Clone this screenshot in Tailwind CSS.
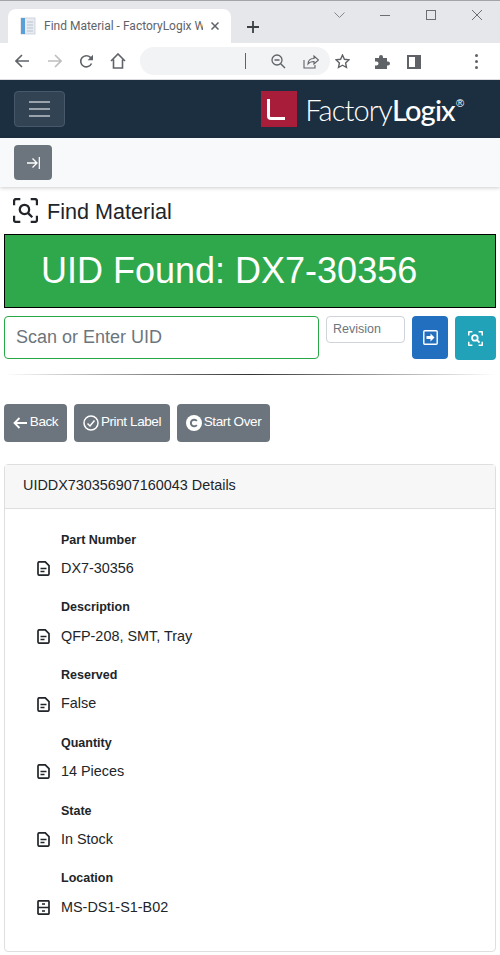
<!DOCTYPE html>
<html lang="en">

<head>
  <meta charset="UTF-8">
  <meta name="viewport" content="width=device-width, initial-scale=1.0">
  <script src="https://cdn.jsdelivr.net/npm/@tailwindcss/browser@4"></script>
  <title>Find Material - FactoryLogix</title>
</head>

<body class="h-[955px] overflow-hidden bg-white font-['Liberation_Sans',Arial,sans-serif] text-[#212529]">

  <!-- browser tabs -->
  <div class="h-[43px] border-t border-[#a3a4a6] bg-[#e6e7ea] flex items-end pl-2 relative">
    <div class="w-[223px] h-[34px] bg-white rounded-t-lg flex items-center pl-3 pr-3 gap-2">
      <svg class="w-4 h-5 shrink-0" viewBox="0 0 16 20">
        <rect x="1" y="2" width="14" height="16" fill="#e8ecf2" stroke="#c5ccd6" stroke-width="0.8" />
        <rect x="1" y="2" width="4" height="16" fill="#5b9fd8" />
        <path d="M7 6h6M7 9h6M7 12h6M7 15h6" stroke="#b9c2cc" />
      </svg>
      <span class="font-['Roboto',sans-serif] text-[12px] text-[#5f6368] whitespace-nowrap overflow-hidden w-[159px]">Find Material - FactoryLogix W</span>
      <svg class="w-2 h-2 shrink-0 ml-auto" viewBox="0 0 8 8"><path d="M0.5 0.5l7 7M7.5 0.5l-7 7" stroke="#5f6368" stroke-width="1.5" /></svg>
    </div>
    <svg class="w-[14px] h-[14px] ml-[15px] mb-[9px]" viewBox="0 0 14 14"><path d="M7 1v12M1 7h12" stroke="#3c4043" stroke-width="1.8" /></svg>
    <svg class="absolute left-[334px] top-[11px] w-[11px] h-[7px]" viewBox="0 0 11 7"><path d="M0.5 0.5l5 5 5-5" fill="none" stroke="#85878a" /></svg>
    <div class="absolute left-[380px] top-[14px] w-[10px] h-px bg-[#6d6e70]"></div>
    <div class="absolute left-[426px] top-[9px] w-[10px] h-[10px] border border-[#6d6e70]"></div>
    <svg class="absolute left-[472px] top-[9px] w-[10px] h-[10px]" viewBox="0 0 10 10"><path d="M0 0l10 10M10 0l-10 10" stroke="#6d6e70" /></svg>
  </div>

  <!-- browser toolbar -->
  <div class="h-[37px] bg-white border-b border-[#dadce0] flex items-center relative">
    <svg class="ml-[15px] w-[14px] h-[14px]" viewBox="0 0 14 14"><path d="M14 7H1.5M7 1L1 7l6 6" fill="none" stroke="#5f6368" stroke-width="1.6" /></svg>
    <svg class="ml-[19px] w-[14px] h-[14px]" viewBox="0 0 14 14"><path d="M0 7h12.5M7 1l6 6-6 6" fill="none" stroke="#bcbec1" stroke-width="1.6" /></svg>
    <svg class="ml-[17px] w-[15px] h-[15px]" viewBox="0 0 15 15"><path d="M12.5 9.5A5.6 5.6 0 1 1 11.4 3.4L13 5" fill="none" stroke="#5f6368" stroke-width="1.6" /><path d="M14 0.8v5.4H8.6z" fill="#5f6368" /></svg>
    <svg class="ml-[16px] w-[16px] h-[16px]" viewBox="0 0 16 16"><path d="M1 8l7-7 7 7M3.5 6.5V15h9V6.5" fill="none" stroke="#5f6368" stroke-width="1.6" /></svg>
    <div class="ml-[14px] w-[190px] h-[28px] rounded-full bg-[#f1f3f4] relative shrink-0">
      <div class="absolute left-[105px] top-[6px] w-px h-[16px] bg-[#5f6368]"></div>
    </div>
    <div class="absolute left-[271px] top-[11px] flex items-center">
      <svg class="w-[15px] h-[15px]" viewBox="0 0 15 15"><circle cx="6" cy="6" r="5" fill="none" stroke="#5f6368" stroke-width="1.3" /><path d="M3.5 6h5M9.7 9.7L14 14" stroke="#5f6368" stroke-width="1.4" /></svg>
      <svg class="ml-[17px] w-[16px] h-[15px]" viewBox="0 0 16 15"><path d="M1 6v8h11v-3" fill="none" stroke="#5f6368" stroke-width="1.1" /><path d="M5 10c0-4 3-5.500 6-5.500V2l4.500 4-4.500 4V7.500c-2.500 0-4.500 .5-6 2.500z" fill="none" stroke="#5f6368" stroke-width="1.1" /></svg>
      <svg class="ml-[16px] w-[15px] h-[15px]" viewBox="0 0 15 15"><path d="M7.500 1l1.900 4.300 4.600 .5-3.400 3.100 .9 4.600-4-2.300-4 2.300 .9-4.600L1 5.800l4.600-.5z" fill="none" stroke="#5f6368" stroke-width="1.4" /></svg>
      <svg class="ml-[25px] w-[15px] h-[15px]" viewBox="0 0 15 15"><path d="M0 4h4V3a2 2 0 0 1 4 0v1h4v3.500h1a2 2 0 0 1 0 4h-1V15H0v-3.500h1.500a2 2 0 0 0 0-4H0z" fill="#5f6368" /></svg>
      <div class="ml-[17px] w-[14px] h-[14px] border-2 border-[#5f6368] border-r-[6px]"></div>
      <div class="ml-[54px] flex flex-col gap-[3px]">
        <div class="w-[3px] h-[3px] rounded-full bg-[#5f6368]"></div>
        <div class="w-[3px] h-[3px] rounded-full bg-[#5f6368]"></div>
        <div class="w-[3px] h-[3px] rounded-full bg-[#5f6368]"></div>
      </div>
    </div>
  </div>

  <!-- navbar -->
  <nav class="h-[58px] bg-[#1c2f40] flex items-center justify-between pl-[14px] pr-[36px]">
    <button class="w-[51px] h-[36px] rounded border border-[#46586a] bg-[#324454] flex flex-col items-center justify-center gap-[5px]">
      <span class="w-[21px] h-[2px] bg-[#9aa3ab]"></span>
      <span class="w-[21px] h-[2px] bg-[#9aa3ab]"></span>
      <span class="w-[21px] h-[2px] bg-[#9aa3ab]"></span>
    </button>
    <div class="flex items-center">
      <div class="w-[36px] h-[36px] bg-[#a81e3a] relative mr-[8px]">
        <div class="absolute left-[6px] top-[8px] w-[18px] h-[21px] border-l-[3px] border-b-[3px] border-white rounded-bl-[4px]"></div>
      </div>
      <span class="font-['Lato',sans-serif] text-[29px] tracking-[-0.85px] font-light text-white leading-none">Factory<span class="font-medium">Logix</span></span>
      <span class="text-[11px] text-white self-start mt-[4px] ml-px">®</span>
    </div>
  </nav>

  <!-- sub bar -->
  <div class="h-[49px] bg-[#f8f9fa] shadow-[0_1px_4px_rgba(0,0,0,0.2)] pl-[14px] pt-[7px] relative">
    <button class="w-[38px] h-[35px] rounded bg-[#6c757d] flex items-center justify-center">
      <svg class="w-[13px] h-[12px]" viewBox="0 0 13 12"><path d="M0 6h9M5.500 1.500L10 6l-4.500 4.500" fill="none" stroke="white" stroke-width="1.300" /><path d="M12.300 0v12" stroke="white" stroke-width="1.200" /></svg>
    </button>
  </div>

  <main class="px-1">
    <h1 class="h-[47px] flex items-center pl-[9px] gap-[9px] text-[21.600px] leading-none">
      <svg class="w-[25px] h-[25px]" viewBox="0 0 24 24" fill="none" stroke="#212529" stroke-width="2.200">
        <path d="M1 7V3a2 2 0 0 1 2-2h4M17 1h4a2 2 0 0 1 2 2v4M23 17v4a2 2 0 0 1-2 2h-4M7 23H3a2 2 0 0 1-2-2v-4" />
        <circle cx="11" cy="11" r="4.500" />
        <path d="M14.500 14.500L18.500 18.500" />
      </svg>
      <span class="pt-[2px]">Find Material</span>
    </h1>

    <div class="h-[74px] border border-black bg-[#2ea84a] text-white text-[36px] flex items-center pl-[36px]">UID Found: DX7-30356</div>

    <div class="flex mt-2 items-start">
      <div class="w-[315px] h-[43px] border border-[#28a745] rounded flex items-center pl-[11px] text-[18px] text-[#6c757d]">Scan or Enter UID</div>
      <div class="w-[79px] h-[27px] ml-[7px] border border-[#ced4da] rounded flex items-center pl-[6px] pb-px text-[12.500px] text-[#6c757d]">Revision</div>
      <button class="w-[36px] h-[43px] ml-[7px] rounded bg-[#226fbf] flex items-center justify-center">
        <svg class="w-[15px] h-[15px]" viewBox="0 0 15 15"><rect x="0.800" y="0.800" width="13.400" height="13.400" rx="1" fill="none" stroke="white" stroke-width="1.400" /><path d="M3.500 6h4V3.500L11.500 7.500l-4 4V9h-4z" fill="white" /></svg>
      </button>
      <button class="w-[41px] h-[44px] ml-[7px] rounded bg-[#22a2b8] flex items-center justify-center">
        <svg class="w-[15px] h-[15px]" viewBox="0 0 24 24" fill="none" stroke="white" stroke-width="2.800">
          <path d="M1 7V3a2 2 0 0 1 2-2h4M17 1h4a2 2 0 0 1 2 2v4M23 17v4a2 2 0 0 1-2 2h-4M7 23H3a2 2 0 0 1-2-2v-4" />
          <circle cx="11" cy="11" r="4.500" />
          <path d="M14.500 14.500L18.500 18.500" />
        </svg>
      </button>
    </div>

    <div class="h-px mt-[14px] bg-gradient-to-r from-transparent via-[#333] to-transparent"></div>

    <div class="flex gap-[7px] mt-[29px]">
      <button class="h-[38px] w-[63px] pb-px rounded bg-[#6c757d] text-white text-[13.500px] tracking-[-0.4px] flex items-center justify-center gap-[3px]">
        <svg class="w-[14px] h-[12px]" viewBox="0 0 14 12"><path d="M14 6H1.500M6.500 1L1.500 6l5 5" fill="none" stroke="white" stroke-width="1.800" /></svg>
        Back
      </button>
      <button class="h-[38px] w-[96px] pb-px rounded bg-[#6c757d] text-white text-[13.500px] tracking-[-0.4px] flex items-center justify-center gap-[2px]">
        <svg class="w-[16px] h-[16px]" viewBox="0 0 16 16"><circle cx="8" cy="8" r="7" fill="none" stroke="white" stroke-width="1.500" /><path d="M4.500 8.500L7 11l4.500-5.500" fill="none" stroke="white" stroke-width="1.500" /></svg>
        Print Label
      </button>
      <button class="h-[38px] w-[93px] pb-px rounded bg-[#6c757d] text-white text-[13.500px] tracking-[-0.4px] flex items-center justify-center gap-[2px]">
        <svg class="w-[16px] h-[16px]" viewBox="0 0 16 16"><circle cx="8" cy="8" r="8" fill="white" /><path d="M10.800 6A3.300 3.300 0 1 0 10.800 10" fill="none" stroke="#6c757d" stroke-width="2" /></svg>
        Start Over
      </button>
    </div>

    <section class="mt-[22px] h-[488px] border border-[#dfdfdf] rounded">
      <div class="h-[44px] bg-[#f7f7f7] border-b border-[#dfdfdf] flex items-center pl-[18px] pb-[2px] text-[14.400px]">UIDDX730356907160043 Details</div>
      <dl class="pl-[32px] pt-[22.500px] text-[14.400px]">
        <div class="h-[67.800px]">
          <dt class="pl-[24px] h-[16px] leading-[16px] font-bold text-[12.500px]">Part Number</dt>
          <dd class="mt-[13px] flex items-center gap-[11px] h-[16px]">
            <svg class="w-[13px] h-[15px]" viewBox="0 0 13 15" fill="none" stroke="#212529" stroke-width="1.700"><path d="M1 2.200a1.400 1.400 0 0 1 1.400-1.400h5.800L12 4.600v8.200a1.400 1.400 0 0 1-1.400 1.400H2.400A1.400 1.400 0 0 1 1 12.800z" /><path d="M3.500 7.500h6M3.500 10.500h4" /></svg>
            DX7-30356
          </dd>
        </div>
        <div class="h-[67.800px]">
          <dt class="pl-[24px] h-[16px] leading-[16px] font-bold text-[12.500px]">Description</dt>
          <dd class="mt-[13px] flex items-center gap-[11px] h-[16px]">
            <svg class="w-[13px] h-[15px]" viewBox="0 0 13 15" fill="none" stroke="#212529" stroke-width="1.700"><path d="M1 2.200a1.400 1.400 0 0 1 1.400-1.400h5.800L12 4.600v8.200a1.400 1.400 0 0 1-1.400 1.400H2.400A1.400 1.400 0 0 1 1 12.800z" /><path d="M3.500 7.500h6M3.500 10.500h4" /></svg>
            QFP-208, SMT, Tray
          </dd>
        </div>
        <div class="h-[67.800px]">
          <dt class="pl-[24px] h-[16px] leading-[16px] font-bold text-[12.500px]">Reserved</dt>
          <dd class="mt-[13px] flex items-center gap-[11px] h-[16px]">
            <svg class="w-[13px] h-[15px]" viewBox="0 0 13 15" fill="none" stroke="#212529" stroke-width="1.700"><path d="M1 2.200a1.400 1.400 0 0 1 1.400-1.400h5.800L12 4.600v8.200a1.400 1.400 0 0 1-1.400 1.400H2.400A1.400 1.400 0 0 1 1 12.800z" /><path d="M3.500 7.500h6M3.500 10.500h4" /></svg>
            False
          </dd>
        </div>
        <div class="h-[67.800px]">
          <dt class="pl-[24px] h-[16px] leading-[16px] font-bold text-[12.500px]">Quantity</dt>
          <dd class="mt-[13px] flex items-center gap-[11px] h-[16px]">
            <svg class="w-[13px] h-[15px]" viewBox="0 0 13 15" fill="none" stroke="#212529" stroke-width="1.700"><path d="M1 2.200a1.400 1.400 0 0 1 1.400-1.400h5.800L12 4.600v8.200a1.400 1.400 0 0 1-1.400 1.400H2.400A1.400 1.400 0 0 1 1 12.800z" /><path d="M3.500 7.500h6M3.500 10.500h4" /></svg>
            14 Pieces
          </dd>
        </div>
        <div class="h-[67.800px]">
          <dt class="pl-[24px] h-[16px] leading-[16px] font-bold text-[12.500px]">State</dt>
          <dd class="mt-[13px] flex items-center gap-[11px] h-[16px]">
            <svg class="w-[13px] h-[15px]" viewBox="0 0 13 15" fill="none" stroke="#212529" stroke-width="1.700"><path d="M1 2.200a1.400 1.400 0 0 1 1.400-1.400h5.800L12 4.600v8.200a1.400 1.400 0 0 1-1.400 1.400H2.400A1.400 1.400 0 0 1 1 12.800z" /><path d="M3.500 7.500h6M3.500 10.500h4" /></svg>
            In Stock
          </dd>
        </div>
        <div class="h-[67.800px]">
          <dt class="pl-[24px] h-[16px] leading-[16px] font-bold text-[12.500px]">Location</dt>
          <dd class="mt-[13px] flex items-center gap-[11px] h-[16px]">
            <svg class="w-[13px] h-[15px]" viewBox="0 0 13 15" fill="none" stroke="#212529" stroke-width="1.700"><rect x="1" y="0.800" width="11" height="13.400" rx="1" /><path d="M1 7.500h11M5 4h3M5 11h3" /></svg>
            MS-DS1-S1-B02
          </dd>
        </div>
      </dl>
    </section>
  </main>
</body>

</html>
